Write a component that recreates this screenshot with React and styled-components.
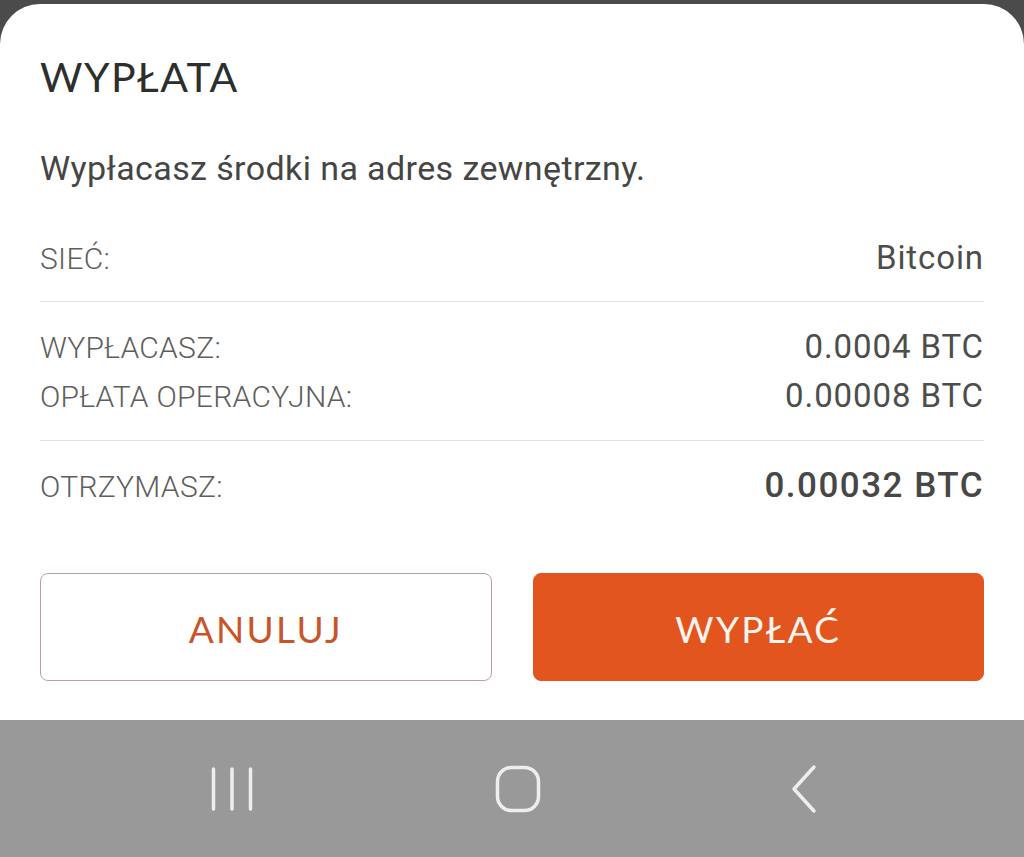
import React from "react";
import styled, { createGlobalStyle } from "styled-components";

const GlobalStyle = createGlobalStyle`
  html, body {
    margin: 0;
    padding: 0;
    background: #4b4b4b;
  }
  * {
    box-sizing: border-box;
  }
`;

const Screen = styled.div`
  width: 1024px;
  height: 857px;
  display: flex;
  flex-direction: column;
  padding-top: 4px;
  background: #4b4b4b;
  overflow: hidden;
`;

const Sheet = styled.div`
  flex: 1;
  background: #fff;
  border-radius: 40px 40px 0 0;
  padding: 48px 40px 0 40px;
  display: flex;
  flex-direction: column;
`;

const Title = styled.h1`
  margin: 0;
  font-family: "Lato", "Open Sans", sans-serif;
  font-weight: 400;
  font-size: 41px;
  line-height: 50px;
  letter-spacing: 1.5px;
  color: #2e2e2e;
`;

const Lead = styled.p`
  margin: 46px 0 0 0;
  font-family: "Roboto", "Liberation Sans", sans-serif;
  font-size: 34px;
  line-height: 40px;
  letter-spacing: 0.4px;
  color: #454545;
`;

const Section = styled.div`
  display: flex;
  flex-direction: column;
  gap: 9px;
  padding-top: ${(p) => p.$top}px;
  padding-bottom: ${(p) => p.$bottom}px;
  border-bottom: ${(p) => (p.$divider ? "1px solid #e2e2e2" : "none")};
`;

const Row = styled.div`
  display: flex;
  justify-content: space-between;
  align-items: baseline;
  line-height: 40px;
  height: 40px;
  font-family: "Roboto", "Liberation Sans", sans-serif;
`;

const Label = styled.span`
  font-size: 30px;
  font-weight: 300;
  letter-spacing: 0.3px;
  color: #5e5e5e;
`;

const Value = styled.span`
  font-size: ${(p) => (p.$strong ? 35 : 33)}px;
  font-weight: ${(p) => (p.$strong ? 500 : 400)};
  letter-spacing: ${(p) => (p.$strong ? 1.5 : 0.9)}px;
  color: ${(p) => (p.$strong ? "#474747" : "#4d4d4d")};
`;

const Actions = styled.div`
  margin-top: 67px;
  display: grid;
  grid-template-columns: 1fr 1fr;
  gap: 41px;
`;

const Button = styled.button`
  height: 108px;
  padding-top: 4px;
  border-radius: 8px;
  font-family: "Lato", "Open Sans", sans-serif;
  font-size: 37px;
  font-weight: 400;
  letter-spacing: 2.3px;
  cursor: pointer;
  border: 1px solid ${(p) => (p.$primary ? "#e2551f" : "#b9a39a")};
  background: ${(p) => (p.$primary ? "#e2551f" : "#fff")};
  color: ${(p) => (p.$primary ? "#fff5ef" : "#c8552a")};
`;

const NavBar = styled.div`
  height: 137px;
  background: #999999;
  display: flex;
  align-items: center;
  gap: 226px;
  padding-left: 202px;
`;

const NavSlot = styled.div`
  width: 60px;
  display: flex;
  justify-content: center;
`;

const NavIcon = styled.svg`
  display: block;
  fill: none;
  stroke: #eeeeee;
  stroke-width: 3.5;
  stroke-linecap: round;
  stroke-linejoin: round;
`;

function RecentsIcon() {
  return (
    <NavIcon width="46" height="48" viewBox="0 0 46 48">
      <path d="M4.5 4v40M23 4v40M41.5 4v40" />
    </NavIcon>
  );
}

function HomeIcon() {
  return (
    <NavIcon width="46" height="48" viewBox="0 0 46 48">
      <rect x="2.5" y="2.5" width="41" height="43" rx="14" />
    </NavIcon>
  );
}

function BackIcon() {
  return (
    <NavIcon width="28" height="50" viewBox="0 0 28 50">
      <path d="M24 3L4 25L24 47" />
    </NavIcon>
  );
}

export default function App() {
  return (
    <Screen>
      <GlobalStyle />
      <Sheet>
        <Title>WYPŁATA</Title>
        <Lead>Wypłacasz środki na adres zewnętrzny.</Lead>

        <Section $top={50} $bottom={23} $divider>
          <Row>
            <Label>SIEĆ:</Label>
            <Value>Bitcoin</Value>
          </Row>
        </Section>

        <Section $top={25} $bottom={24} $divider>
          <Row>
            <Label>WYPŁACASZ:</Label>
            <Value>0.0004 BTC</Value>
          </Row>
          <Row>
            <Label>OPŁATA OPERACYJNA:</Label>
            <Value>0.00008 BTC</Value>
          </Row>
        </Section>

        <Section $top={25} $bottom={0}>
          <Row>
            <Label>OTRZYMASZ:</Label>
            <Value $strong>0.00032 BTC</Value>
          </Row>
        </Section>

        <Actions>
          <Button>ANULUJ</Button>
          <Button $primary>WYPŁAĆ</Button>
        </Actions>
      </Sheet>
      <NavBar>
        <NavSlot>
          <RecentsIcon />
        </NavSlot>
        <NavSlot>
          <HomeIcon />
        </NavSlot>
        <NavSlot>
          <BackIcon />
        </NavSlot>
      </NavBar>
    </Screen>
  );
}
